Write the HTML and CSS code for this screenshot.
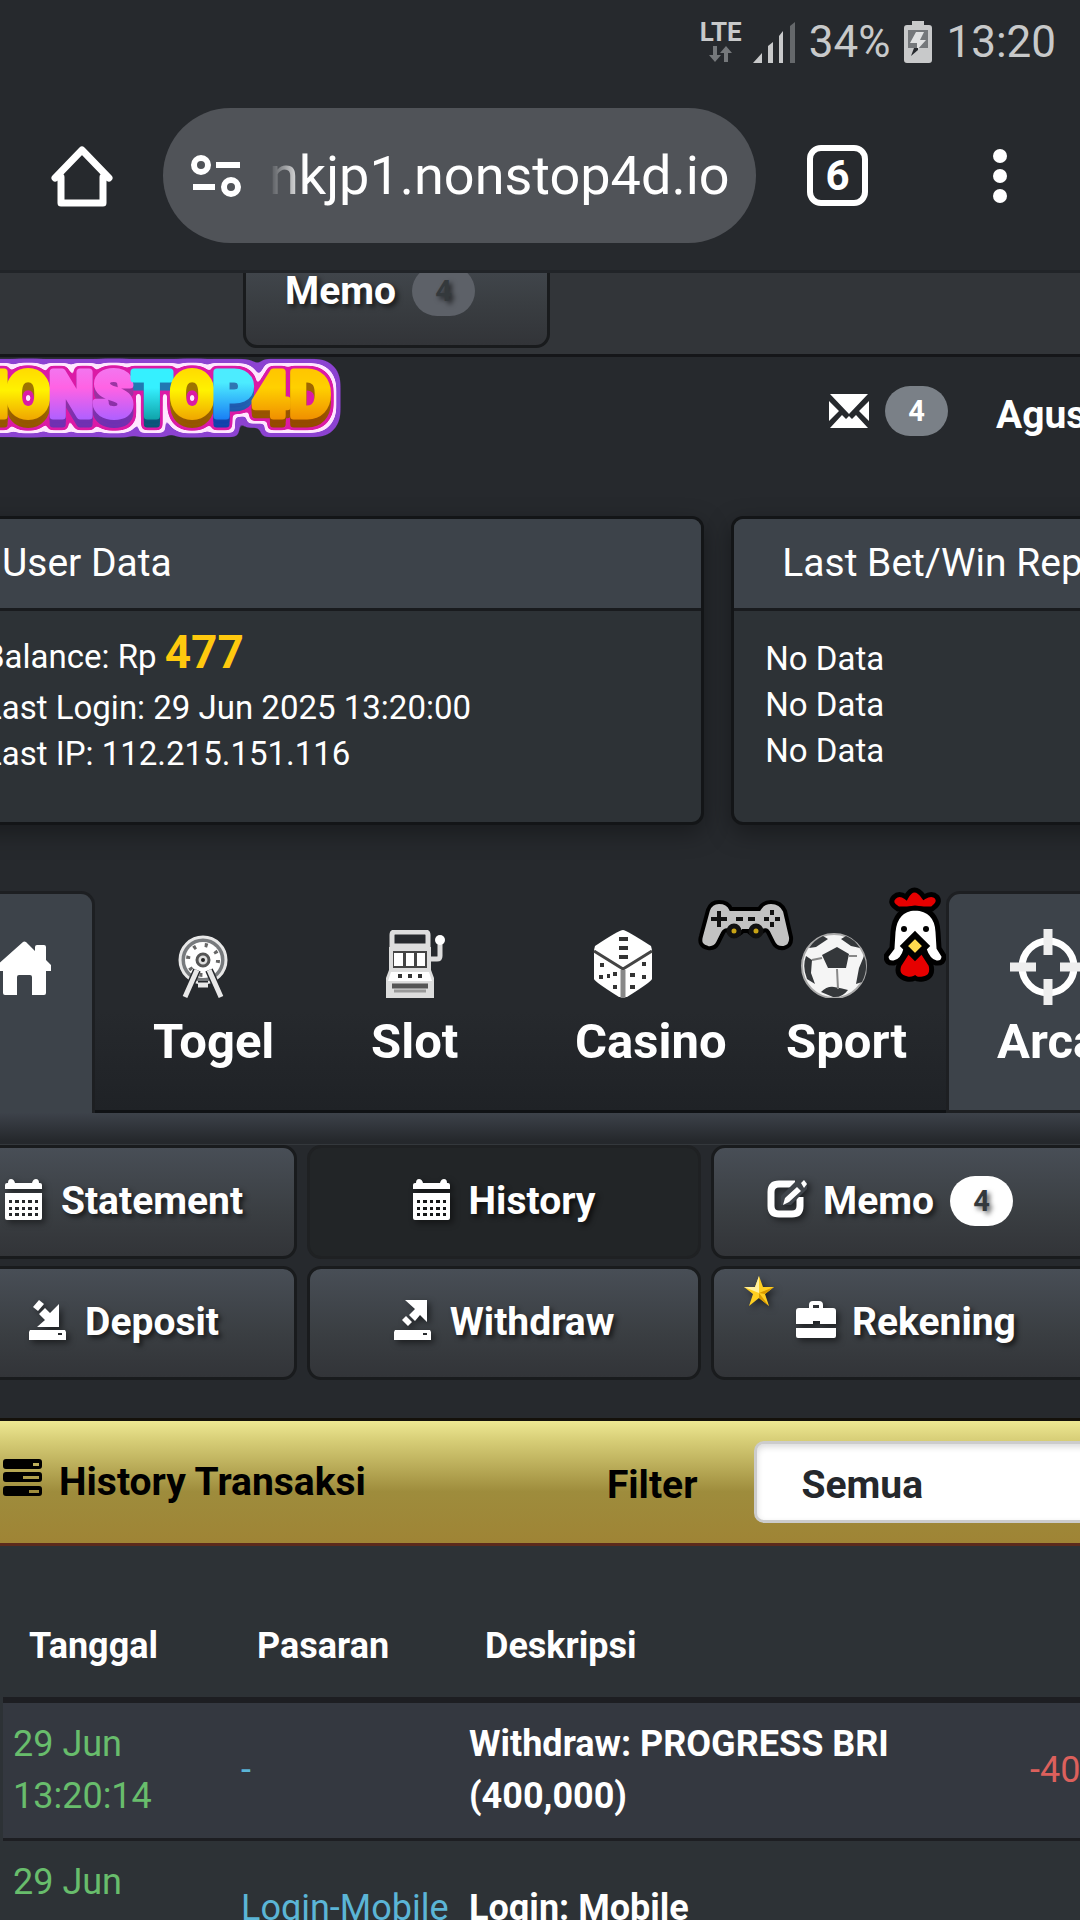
FILE: index.html
```html
<!DOCTYPE html>
<html lang="id">
<head>
<meta charset="utf-8">
<meta name="viewport" content="width=device-width, initial-scale=1">
<title>History Transaksi</title>
<link rel="stylesheet" href="styles.css">
</head>
<body>
<div class="screen">
  <header class="status">
    <span class="lte"><span class="lte-text">LTE</span>
      <svg width="26" height="16" viewBox="0 0 26 16"><path fill="#75787b" d="M5 0h4v9h4l-6 7-6-7h4zM16 16h4V7h4l-6-7-6 7h4z"/></svg>
    </span>
    <svg width="42" height="42" viewBox="0 0 42 42"><path fill="#c8c9ca" d="M0 42 9 32v10zM15 42V25l5-4v21zM26 42V15l4-5v32z"/><path fill="#65686b" d="M37 42V5l5-4v41z"/></svg>
    <span class="status-text">34%</span>
    <svg width="28" height="42" viewBox="0 0 28 42"><path fill="#c8c9ca" d="M8 0h12v4h5a3 3 0 0 1 3 3v32a3 3 0 0 1-3 3H3a3 3 0 0 1-3-3V7a3 3 0 0 1 3-3h5z"/><path fill="#75787b" d="M4 9h20v18H4z"/><path fill="#e0e1e2" d="M12 11h8l-4 8h6L13 29v-7H6z"/><path fill="#26292d" d="m12 27 2 0v2l-7 6 3-8z"/></svg>
    <span class="status-text">13:20</span>
  </header>
  <nav class="browser">
    <button class="plain" aria-label="Home"><svg width="62" height="62" viewBox="0 0 62 62"><path fill="none" stroke="#fff" stroke-width="7" stroke-linejoin="round" stroke-linecap="round" d="M10 32v26h42V32M4 33 31 5l27 28"/></svg></button>
    <div class="address">
      <svg width="52" height="44" viewBox="0 0 52 44" fill="none" stroke="#fff" stroke-width="6"><circle cx="11" cy="11" r="7"/><path d="M26 11h24M3 33h22"/><circle cx="41" cy="33" r="7"/></svg>
      <span class="url">nkjp1.nonstop4d.io</span>
    </div>
    <button class="tabcount">6</button>
    <button class="plain menu" aria-label="Menu"><svg width="14" height="56" viewBox="0 0 14 56" fill="#fff"><circle cx="7" cy="8" r="7"/><circle cx="7" cy="28" r="7"/><circle cx="7" cy="48" r="7"/></svg></button>
  </nav>

  <main class="view">
    <div class="topstrip">
      <button class="btn top-memo">Memo <span class="badge dim">4</span></button>
    </div>
    <div class="site">
      <div class="sitehead">
        <svg class="logo" width="400" height="90" viewBox="-49 0 400 90" role="img" aria-label="NONSTOP4D">
          <defs>
            <linearGradient id="gy" gradientUnits="userSpaceOnUse" x1="0" y1="10" x2="0" y2="62"><stop offset="0" stop-color="#ffd900"/><stop offset=".45" stop-color="#fff200"/><stop offset="1" stop-color="#f0a800"/></linearGradient>
            <linearGradient id="go" gradientUnits="userSpaceOnUse" x1="0" y1="10" x2="0" y2="62"><stop offset="0" stop-color="#ffc400"/><stop offset=".4" stop-color="#ffd000"/><stop offset="1" stop-color="#f09000"/></linearGradient>
            <linearGradient id="gp" gradientUnits="userSpaceOnUse" x1="0" y1="10" x2="0" y2="62"><stop offset="0" stop-color="#f277f0"/><stop offset=".4" stop-color="#ff62e4"/><stop offset="1" stop-color="#b060ff"/></linearGradient>
            <linearGradient id="gc" gradientUnits="userSpaceOnUse" x1="0" y1="10" x2="0" y2="62"><stop offset=".4" stop-color="#35f0ff"/><stop offset="1" stop-color="#10a5ab"/></linearGradient>
            <linearGradient id="gb" gradientUnits="userSpaceOnUse" x1="0" y1="10" x2="0" y2="62"><stop offset=".3" stop-color="#4cecff"/><stop offset="1" stop-color="#1a80f5"/></linearGradient>
            <filter id="rim" filterUnits="userSpaceOnUse" x="-60" y="-10" width="420" height="110" color-interpolation-filters="sRGB">
              <feOffset in="SourceGraphic" dy="4" result="o1"/>
              <feOffset in="SourceGraphic" dy="8" result="o2"/>
              <feMerge result="ext"><feMergeNode in="o2"/><feMergeNode in="o1"/></feMerge>
              <feColorMatrix in="ext" type="matrix" values=".62 0 0 0 0  0 .5 0 0 0  0 0 .7 0 0  0 0 0 1 0" result="depth"/>
              <feMerge result="solid"><feMergeNode in="depth"/><feMergeNode in="SourceGraphic"/></feMerge>
              <feMorphology in="solid" operator="dilate" radius="2" result="d1"/>
              <feGaussianBlur in="d1" stdDeviation="2" result="b1"/>
              <feColorMatrix in="b1" type="matrix" values="0 0 0 0 .86  0 0 0 0 .1  0 0 0 0 .65  0 0 0 8 -2.5" result="pink"/>
              <feMorphology in="solid" operator="dilate" radius="5" result="d2"/>
              <feGaussianBlur in="d2" stdDeviation="2" result="b2"/>
              <feColorMatrix in="b2" type="matrix" values="0 0 0 0 1  0 0 0 0 .9  0 0 0 0 1  0 0 0 8 -3" result="white"/>
              <feMorphology in="solid" operator="dilate" radius="9" result="d3"/>
              <feGaussianBlur in="d3" stdDeviation="3" result="b3"/>
              <feColorMatrix in="b3" type="matrix" values="0 0 0 0 .55  0 0 0 0 .26  0 0 0 0 .82  0 0 0 8 -3" result="purple"/>
              <feMerge><feMergeNode in="purple"/><feMergeNode in="white"/><feMergeNode in="pink"/><feMergeNode in="solid"/></feMerge>
            </filter>
          </defs>
          <text class="logo-text" y="59" filter="url(#rim)"><tspan class="ly" x="-14">N</tspan><tspan class="ly" x="28">O</tspan><tspan class="lp" x="71">N</tspan><tspan class="lp" x="113">S</tspan><tspan class="lc" x="152">T</tspan><tspan class="ly" x="192">O</tspan><tspan class="lb" x="233">P</tspan><tspan class="lo" x="271">4</tspan><tspan class="lo" x="310">D</tspan></text>
        </svg>
        <a class="inbox" href="#memo" aria-label="Memo"><svg width="40" height="34" viewBox="0 0 40 34" fill="#fff"><path d="M1 0h38L20 20zM0 7l10 10L0 27zM40 7v20L30 17zM1 34l12-13 4 4 3-3 3 3 4-4 12 13z"/></svg><span class="badge grey">4</span></a>
        <span class="user">Agus</span>
      </div>

      <section class="cards">
        <article class="card">
          <h2>User Data</h2>
          <div class="card-body user-body"><p class="balance">Balance: Rp <b>477</b></p><p>Last Login: 29 Jun 2025 13:20:00</p><p>Last IP: 112.215.151.116</p></div>
        </article>
        <article class="card">
          <h2>Last Bet/Win Report</h2>
          <div class="card-body"><p>No Data</p><p>No Data</p><p>No Data</p></div>
        </article>
      </section>

      <nav class="tabs">
        <a class="tab home" href="#home" aria-label="Home"><svg width="56" height="54" viewBox="0 0 56 54" fill="#fff"><path d="M28 1q1-1 3 0l9 9V6q0-2 2-2h7q2 0 2 2v13l6 6q1 1 1 3t-2 2h-5v22q0 2-2 2H37V36q0-2-2-2H24q-2 0-2 2v18H10q-2 0-2-2V30H2q-2 0-2-2t1-3z"/></svg></a>
        <a class="tab" href="#togel">
          <svg class="tab-icon" width="68" height="68" viewBox="-36 -30 68 68"><circle r="23" fill="#777a7d" stroke="#e8e8e8" stroke-width="3"/><circle r="18" fill="#fff"/><circle r="15" fill="none" stroke="#666" stroke-width="4" stroke-dasharray="3 9"/><circle r="6" fill="#ddd" stroke="#555" stroke-width="3"/><circle r="2" fill="#222"/><path d="M-6 10-18 37M6 10l12 27M-5 25H5" stroke="#26292d" stroke-width="8"/><path d="M-6 10-18 37M6 10l12 27M-5 25H5" stroke="#e8e8e8" stroke-width="5"/></svg>
          <span>Togel</span></a>
        <a class="tab" href="#slot">
          <svg class="tab-icon" width="68" height="68" viewBox="-1 0 68 68"><path fill="none" stroke="#ddd" stroke-width="5" d="M6 16V5q0-3 3-3h30q3 0 3 3v11zM42 29h9q3 0 3-3V12"/><circle cx="54" cy="10" r="5" fill="#fff"/><path fill="#ddd" d="M3 17h42v23l3 8v20H0V48l3-8z"/><path fill="#444" d="M7 21h34v17H7z"/><path fill="#fff" d="M8 23h9v13H8zM20 23h8v13h-8zM31 23h8v13h-8zM5 42h38l3 9H2z"/><path stroke="#333" stroke-width="4" d="M12 46h4M22 46h4M32 46h4"/><path stroke="#555" stroke-width="5" d="M6 56h36"/><path stroke="#999" stroke-width="3" d="M8 61h32"/></svg>
          <span>Slot</span></a>
        <a class="tab" href="#casino">
          <svg class="tab-icon" width="68" height="68" viewBox="-4 0 68 68"><path fill="#fff" d="M30 0q3 0 28 16l1 4v29q-1 3-25 18h-8Q2 52 1 49V20l1-4Q26 0 30 0z"/><path fill="none" stroke="#444" stroke-width="3" d="m1 21 29 18 29-18"/><path stroke="#888" stroke-width="5" d="M30 40v28"/><path stroke="#333" stroke-width="4" d="M26 9h9M26 18h9M26 27h9M7 35h4M6 47h4M14 46h3M20 44h4M20 57h4M37 45h5M37 57h5M49 34h4M49 47h4"/></svg>
          <span>Casino</span></a>
        <a class="tab" href="#sport">
          <svg class="tab-icon" width="68" height="68" viewBox="-34 -36 68 68"><circle r="32" fill="#f5f5f5" stroke="#aaa" stroke-width="2"/><path fill="#34373a" d="m3-19 12 7-3 14H-6l-6-13zM-28-10l6 4-1 13 4 11-8-5q-5-12-1-23zM30-10q5 12-2 26l-6 2 3-16zM-11-30l5 3-12 8-7 1q5-8 14-12zM12-30q8 3 14 12l-9-2-10-7zM-13 26q6-6 13-5t14 3q-6 8-15 7z"/><path stroke="#888" stroke-width="2" d="m3 3 1 20M-12-8l-10 2M15-10l8 0"/></svg>
          <span>Sport</span></a>
        <a class="tab arcade" href="#arcade">
          <svg class="tab-icon" width="78" height="78" viewBox="-39 -39 78 78"><circle r="26" fill="none" stroke="#fff" stroke-width="7"/><path stroke="#eee" stroke-width="9" d="M0-38v26M0 12v26M-38 0h26M12 0h26"/></svg>
          <span>Arcade</span></a>
        <svg class="pad" width="96" height="52" viewBox="0 0 96 52"><path fill="#c2c2c2" stroke="#000" stroke-width="4" d="M21 3q9 0 12 7h28q4-7 12-7 10 0 14 9l6 26q1 9-7 11-8 1-11-6l-5-10q-2-3-5-1-7 8-15 0h-5q-7 8-15 0-3-2-5 2l-5 10q-3 6-10 5Q0 47 3 37l7-26q3-8 11-8z"/><path stroke="#111" stroke-width="4" d="M21 12v16M13 20h16M38 20h7M50 20h7M74 11v5M74 23v5M66 20h5M77 20h5"/><circle cx="36" cy="32" r="5" fill="#c9a415" stroke="#111" stroke-width="5"/><circle cx="58" cy="32" r="5" fill="#c9a415" stroke="#111" stroke-width="5"/></svg>
        <svg class="rooster" width="62" height="96" viewBox="0 0 62 96"><path fill="#e60000" stroke="#000" stroke-width="5" d="M14 23Q4 17 10 11q5-5 12 0 8-14 18 0 8-5 13 0 4 6-5 12z"/><path fill="#fff" stroke="#000" stroke-width="5" d="M31 22q22 1 23 24l1 16 5 8q0 8-8 7-8-2-12-14H22q-3 12-12 14-8 1-8-7l6-8 1-16q2-23 22-24z"/><path fill="#e60000" stroke="#000" stroke-width="5" d="M24 65q7 4 14 0l9 14q3 12-8 14-5 1-8-1-4 2-8 1-12-3-8-14z"/><path fill="#ffd94f" stroke="#000" stroke-width="6" d="m31 49 11 11-11 11-11-11z"/><circle cx="20" cy="43" r="3"/><circle cx="42" cy="43" r="3"/></svg>
      </nav>
      <div class="tabbar-shadow"></div>

      <nav class="actions">
        <button class="btn"><svg class="ico" width="37" height="41" viewBox="0 0 37 41"><use href="#cal"/></svg>Statement</button>
        <button class="btn active"><svg class="ico" width="37" height="41" viewBox="0 0 37 41"><g id="cal" fill="#fff"><path d="M0 10V6q0-2 2-2h1q0-4 3-4t4 4h17q1-4 4-4t3 4h1q2 0 2 2v4z"/><path fill-rule="evenodd" d="M0 14h37v25q0 2-2 2H2q-2 0-2-2zM4 21h3v3H4zm6 0h4v3h-4zm7 0h3v3h-3zm6 0h4v3h-4zm7 0h3v3h-3zM4 28h3v3H4zm6 0h4v3h-4zm7 0h3v3h-3zm6 0h4v3h-4zm7 0h3v3h-3zM4 34h3v3H4zm6 0h4v3h-4zm7 0h3v3h-3zm6 0h4v3h-4zm7 0h3v3h-3z"/></g></svg>History</button>
        <button class="btn left"><svg class="ico" width="40" height="38" viewBox="0 0 40 38"><path fill="none" stroke="#fff" stroke-width="7" d="M28 4H12q-8 0-8 8v14q0 8 8 8h13q8 0 8-8V17"/><path fill="#3f444a" d="m22 8 8-8h10v9L24 25H14v-9z"/><path fill="#fff" d="m30 7 4 4-12 11-6 3 2-7zM34 3l3-3 3 4-3 4z"/></svg>Memo<span class="badge light">4</span></button>
        <button class="btn"><svg class="ico" width="37" height="40" viewBox="0 0 37 40"><g id="drive"><path fill="#fff" fill-rule="evenodd" d="M1 30h35l1 2v8H0v-8zM29 33v2h4v-2z"/></g><path fill="#fff" d="m4 7 6-7 5 4-6 7zM10 14l6-6 5 5 9-9v23H8l8-7z"/></svg>Deposit</button>
        <button class="btn"><svg class="ico" width="37" height="40" viewBox="0 0 37 40"><use href="#drive"/><path fill="#fff" d="M11 0h22v22l-7-7-5 6-6-6 6-6zM12 16l6 6-4 4-6-6z"/></svg>Withdraw</button>
        <button class="btn left rek"><svg class="star" width="30" height="30" viewBox="0 0 30 30"><path fill="#ffcf21" d="m15 0 4 11h11l-9 7 4 12-10-8-10 8 4-12-9-7h11z"/><path fill="#fff0a0" d="m15 0-4 11 4 6zM0 11h11l4 6z"/><path fill="#d99a00" d="m30 11-9 7-6-1zM25 30l-10-8v-5z"/></svg><svg class="ico" width="40" height="38" viewBox="0 0 40 38"><path fill="#fff" fill-rule="evenodd" d="M0 23V10q0-3 3-3h10V4q0-4 4-4h6q4 0 4 4v3h10q3 0 3 3v13H24v-3h-7v3zM17 7h6V4h-6zM0 27h40v8q0 2-2 2H2q-2 0-2-2z"/></svg>Rekening</button>
      </nav>

      <section class="history">
        <div class="bar">
          <svg class="bar-ico" width="39" height="37" viewBox="0 0 39 37"><path fill-rule="evenodd" d="M3 0h33q3 0 3 3v4q0 3-3 3H3q-3 0-3-3V3q0-3 3-3zm27 4v3h6V4zM3 13h33q3 0 3 3v4q0 3-3 3H3q-3 0-3-3v-4q0-3 3-3zm17 4v3h16v-3zM3 27h33q3 0 3 3v4q0 3-3 3H3q-3 0-3-3v-4q0-3 3-3zm23 4v3h10v-3z"/></svg>
          <h1>History Transaksi</h1>
          <label for="filter">Filter</label>
          <select id="filter"><option>Semua</option></select>
        </div>
        <table>
          <thead><tr><th class="c1">Tanggal</th><th class="c2">Pasaran</th><th class="c3">Deskripsi</th><th></th></tr></thead>
          <tbody>
            <tr><td class="date">29 Jun 13:20:14</td><td class="market">-</td><td class="desc">Withdraw: PROGRESS BRI (400,000)</td><td class="minus">-400,000</td></tr>
            <tr><td class="date">29 Jun 13:20:00</td><td class="market">Login-Mobile</td><td class="desc">Login: Mobile</td><td></td></tr>
          </tbody>
        </table>
      </section>
    </div>
  </main>
</div>
</body>
</html>
```
FILE: styles.css
```css
* { box-sizing: border-box; margin: 0; }
body { background: #26292d; color: #fff; font-family: Roboto, "Liberation Sans", sans-serif; font-size: 33px; }
a { color: inherit; text-decoration: none; }
button { font-family: inherit; color: inherit; cursor: pointer; }
svg { display: block; flex: none; }
.screen { height: 100vh; overflow: hidden; display: flex; flex-direction: column; }

.status { display: flex; justify-content: flex-end; align-items: center; gap: 14px; height: 84px; padding: 0 24px 0 0; color: #c8c9ca; flex: none; }
.lte { display: flex; flex-direction: column; align-items: center; gap: 4px; margin-right: -3px; }
.lte-text { font-size: 26px; line-height: 20px; font-weight: 700; }
.status-text { font-size: 44px; line-height: 60px; }

.browser { display: flex; align-items: center; height: 189px; padding: 0 73px 3px 51px; border-bottom: 3px solid #212428; flex: none; }
.plain { border: 0; background: none; padding: 0; }
.address { flex: 1; display: flex; align-items: center; height: 135px; margin: 0 51px 0 50px; padding: 0 24px 0 27px; gap: 27px; border-radius: 68px; background: #505358; overflow: hidden; }
.url { font-size: 54px; line-height: 64px; white-space: nowrap; -webkit-mask-image: linear-gradient(90deg, transparent, #000 36px); mask-image: linear-gradient(90deg, transparent, #000 36px); }
.tabcount { width: 61px; height: 61px; padding: 0; border: 6px solid #fff; border-radius: 14px; background: none; font-size: 42px; line-height: 48px; font-weight: 700; }
.menu { margin-left: 125px; }

.view { flex: 1; min-height: 0; overflow: hidden; }
.topstrip { height: 84px; padding-left: 243px; background: #323539; border-bottom: 3px solid #151619; overflow: hidden; display: flex; align-items: flex-end; padding-bottom: 6px; }
.btn { display: flex; align-items: center; justify-content: center; height: 114px; border: 3px solid #191b1d; border-radius: 14px; background: linear-gradient(#484e56, #3a3e42 60%, #323438); font-size: 39px; line-height: 46px; font-weight: 700; text-shadow: 3px 3px 5px rgba(0,0,0,.6); padding: 0 0 2px; position: relative; white-space: nowrap; }
.top-memo { width: 307px; flex: none; justify-content: flex-start; padding: 0 0 0 39px; }
.badge { display: inline-flex; align-items: center; justify-content: center; width: 63px; height: 50px; border-radius: 25px; margin-left: 16px; font-size: 29px; font-weight: 700; }
.dim { background: #5d6168; color: #34393c; }
.grey { background: #7a8087; }
.light { background: #fff; color: #34393c; }

.site { width: 142%; margin-left: -49px; }
.sitehead { display: flex; align-items: flex-start; height: 159px; }
.logo { overflow: visible; }
.logo-text { font-weight: 700; font-size: 62px; text-anchor: middle; stroke-width: 7px; stroke-linejoin: round; }
.ly { fill: url(#gy); stroke: url(#gy); }
.lo { fill: url(#go); stroke: url(#go); }
.lp { fill: url(#gp); stroke: url(#gp); }
.lc { fill: url(#gc); stroke: url(#gc); }
.lb { fill: url(#gb); stroke: url(#gb); }
.inbox { display: flex; align-items: center; margin: 29px 0 0 478px; height: 50px; }
.user { font-size: 39px; line-height: 46px; font-weight: 700; margin: 35px 0 0 48px; }

.cards { display: grid; grid-template-columns: 1fr 1fr; gap: 27px; }
.card { height: 309px; border: 3px solid #131517; border-radius: 12px; background: #2d3236; overflow: hidden; box-shadow: 0 8px 24px rgba(0,0,0,.35); }
.card h2 { height: 92px; padding: 0 0 0 48px; border-bottom: 3px solid #191b1e; background: #3d434a; font-size: 39px; line-height: 88px; font-weight: 400; white-space: nowrap; }
.card-body { padding: 25px 31px; font-size: 33px; line-height: 46px; white-space: nowrap; }
.user-body { padding: 13px 30px; }
.balance { line-height: 56px; }
.balance b { font-size: 46px; color: #ffc90e; }

.tabs { position: relative; display: grid; grid-template-columns: 144px 218px 204px 211px 218px 1fr; height: 222px; margin-top: 66px; }
.tab { display: flex; flex-direction: column; padding: 39px 0 0 58px; border-bottom: 3px solid #101215; background: linear-gradient(#26292d 55%, #1f2226); font-size: 49px; line-height: 56px; font-weight: 700; }
.tab-icon { margin: 0 0 16px 14px; }
.home { padding: 47px 0 0 44px; border: 3px solid #1d1f22; border-width: 3px 3px 0 0; border-radius: 0 14px 0 0; background: #3d434a; }
.arcade { padding: 34px 0 0 48px; border: 3px solid #1d1f22; border-radius: 14px 0 0 0; background: #3d434a; }
.arcade .tab-icon { margin: 0 0 8px 12px; }
.pad { position: absolute; left: 747px; top: 8px; }
.rooster { position: absolute; left: 933px; top: -5px; }
.tabbar-shadow { height: 32px; background: linear-gradient(#3d424a, #25282c 90%); border-bottom: 1px solid #34383c; }

.actions { display: grid; grid-template-columns: 346px 394px 1fr; gap: 7px 10px; }
.ico { margin: 0 19px 4px 0; filter: drop-shadow(3px 3px 3px rgba(0,0,0,.5)); }
.active { background: #222527; border-color: #1f2123; }
.left { justify-content: flex-start; padding-left: 53px; }
.left .ico { margin-right: 16px; }
.rek { padding-left: 82px; }
.star { position: absolute; left: 30px; top: 7px; filter: drop-shadow(3px 3px 3px rgba(0,0,0,.5)); }

.history { margin-top: 38px; background: #2d3236; }
.bar { display: flex; align-items: center; height: 128px; padding-left: 52px; border-top: 3px solid #14110b; border-bottom: 3px solid #5c2a1c; background: linear-gradient(#eee893, #d8cf78 15%, #9e8c3c 58%, #9f8435); color: #000; font-size: 39px; line-height: 46px; font-weight: 700; }
.bar-ico { margin-bottom: 10px; }
.bar h1 { font-size: 39px; line-height: 46px; margin-left: 17px; }
.bar label { margin: 6px 0 0 241px; }
.bar select { appearance: none; flex: 1; height: 82px; margin-left: 57px; padding: 6px 44px 0; border: 3px solid #ccc; border-radius: 10px; background: #fff; color: #25282c; font: inherit; box-shadow: inset 0 3px 6px rgba(0,0,0,.15); }

table { width: 1426px; margin: 48px 0 0 52px; border-collapse: separate; border-spacing: 0; table-layout: fixed; font-size: 36px; line-height: 52px; }
.c1, .c2 { width: 228px; }
.c3 { width: 490px; }
th { height: 109px; padding: 0 26px; text-align: left; border-bottom: 6px solid #1d1e22; }
td { padding: 15px 10px 16px; border-bottom: 3px solid #1d1e22; height: 138px; }
tbody tr:nth-child(odd) { background: #343840; }
.date { color: #68bd6c; padding-right: 40px; }
.market { color: #5bb5d6; white-space: nowrap; }
.desc { font-weight: 700; }
.minus { color: #dc605c; padding-left: 81px; }
```
